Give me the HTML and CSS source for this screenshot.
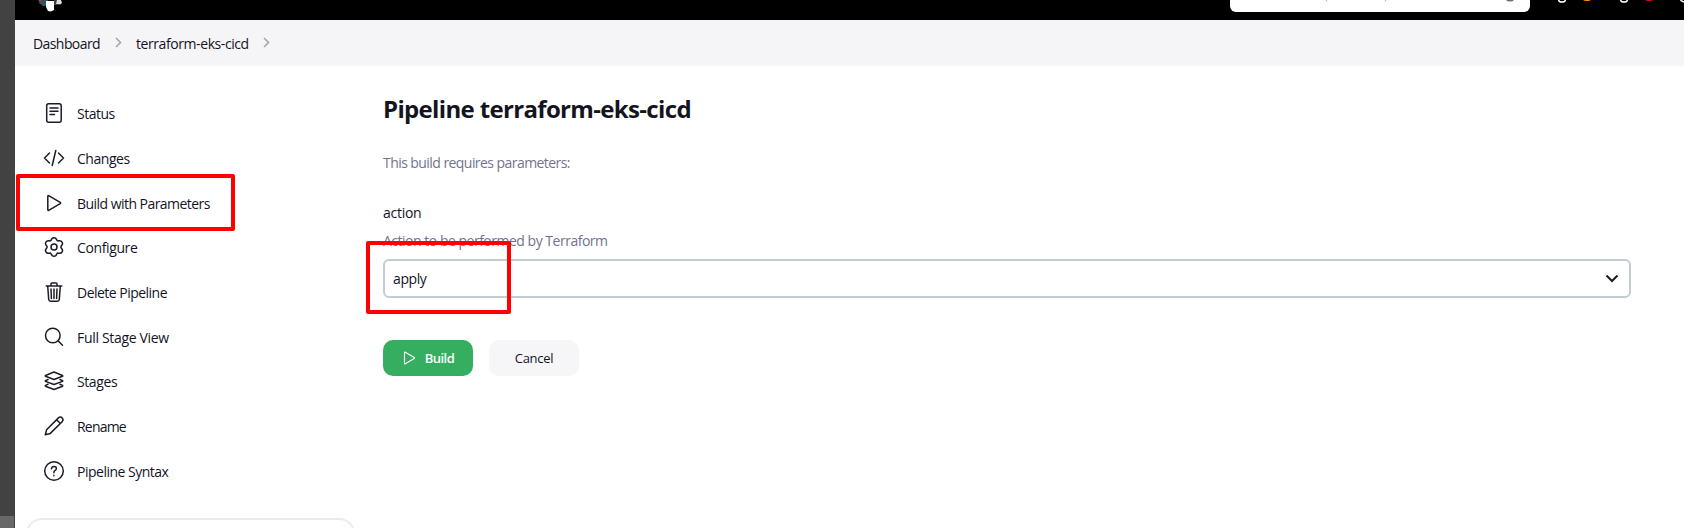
FILE: index.html
```html
<!DOCTYPE html>
<html lang="en">
<head>
<meta charset="utf-8">
<title>Pipeline terraform-eks-cicd</title>
<link rel="stylesheet" href="styles.css">
</head>
<body>
<div class="gutter"><span class="gutter-thumb"></span></div>
<div class="app">
  <header class="topbar">
    <svg class="logo" width="32" height="14" viewBox="0 0 32 14">
      <path d="M4 0h9v6H8L4 3z" fill="#36505f"/>
      <path d="M3 0h3v1H4z" fill="#c23a35"/>
      <path d="M11 1h8v9l-3 1.500-3-.5-2-4z" fill="#fff"/>
      <path d="M19 0h3v5h-3z" fill="#463b3b"/>
      <path d="M22 0h4l1 3-2 1.500-4-.5z" fill="#ddd"/>
    </svg>
    <div class="search"><svg width="300" height="12" viewBox="0 0 300 12" fill="none"><path d="M96 0l1.500 1.500M156 0l-1.500 1.500" stroke="#aaa9bd"/><path d="M276 0h8q-1 1.500-4 1.500t-4-1.500" fill="#6d6b8a"/></svg></div>
    <svg class="header-icons" width="134" height="4" viewBox="0 0 134 4" fill="none">
      <path d="M8.500 0q.5 2 3.500 2t3.500-2M70.500 0q.5 2 3.500 2t3.500-2M130.500 0q.5 1 3.500 2" stroke="#fff" stroke-width="1.500"/>
      <path d="M33 0h8l-2 1h-4z" fill="#fe820a"/><path d="M95 0h8l-2 1h-4z" fill="#e6001f"/>
    </svg>
  </header>
  <nav class="crumbs">
    <span class="crumb-home">Dashboard</span>
    <svg class="chev" width="7" height="11" viewBox="0 0 7 11"><path d="M1 1l4.500 4.500L1 10"/></svg>
    <span class="crumb-job">terraform-eks-cicd</span>
    <svg class="chev" width="7" height="11" viewBox="0 0 7 11"><path d="M1 1l4.500 4.500L1 10"/></svg>
  </nav>
  <div class="page">
    <aside class="side">
      <ul class="tasks">
        <li class="task"><svg class="icon" viewBox="0 0 22 22"><rect x="3.700" y="1.800" width="14.500" height="18.400" rx="2"/><path d="M7 6h8M7 9.200h8M7 12.400h4.500"/></svg><span class="t-status">Status</span></li>
        <li class="task"><svg class="icon" viewBox="0 0 22 22"><path d="M6.500 6L1.500 11l5 5M15.500 6l5 5-5 5M12.800 3.500l-3.600 15"/></svg><span class="t-changes">Changes</span></li>
        <li class="task"><svg class="icon" viewBox="0 0 22 22"><path d="M4.800 4.200q0-1 .9-.5l11.500 6.700q.8.600 0 1.200L5.700 18.300q-.9.500-.9-.5z"/></svg><span class="t-build">Build with Parameters</span></li>
        <li class="task"><svg class="icon" viewBox="0 0 22 22"><circle cx="11" cy="11" r="3"/><path d="M8.100 4.200C8.700 2.200 9.500 1.700 11 1.700s2.300.5 2.900 2.500q.5 1 1.600.6c2-.5 2.900 0 3.600 1.400.8 1.300.7 2.300-.8 3.700q-.8 1.100 0 2.200c1.500 1.400 1.600 2.400.8 3.700-.7 1.400-1.600 1.900-3.600 1.400q-1.100-.4-1.600.6c-.6 2-1.400 2.500-2.900 2.500s-2.300-.5-2.900-2.500q-.5-1-1.600-.6c-2 .5-2.900 0-3.600-1.400-.8-1.300-.7-2.300.8-3.700q.8-1.100 0-2.200C2.200 8.500 2.100 7.500 2.900 6.200c.7-1.400 1.600-1.900 3.600-1.400q1.100.4 1.600-.6z"/></svg><span class="t-configure">Configure</span></li>
        <li class="task"><svg class="icon" viewBox="0 0 22 22"><path d="M3.200 5h15.600M4.700 5l1 13.500q.2 1.700 1.800 1.700h7q1.600 0 1.800-1.700l1-13.500M8 5V3q0-1 1-1h4q1 0 1 1v2M8 8l.4 9.500M11 8v9.500M14 8l-.4 9.500"/></svg><span class="t-delete">Delete Pipeline</span></li>
        <li class="task"><svg class="icon" viewBox="0 0 22 22"><circle cx="9.800" cy="9.500" r="7.300"/><path d="M15 14.800l4.500 4.500"/></svg><span class="t-view">Full Stage View</span></li>
        <li class="task"><svg class="icon" viewBox="0 0 22 22"><path d="M11 2l8.500 3.500q.6.400 0 .8L11 9.500 2.500 6.300q-.6-.4 0-.8zM5 9.500L2.500 10.600q-.6.400 0 .8L11 14.500l8.500-3.100q.6-.4 0-.8L17 9.500M5 14.300l-2.500 1.100q-.6.400 0 .8L11 19.500l8.500-3.300q.6-.4 0-.8L17 14.300"/></svg><span class="t-stages">Stages</span></li>
        <li class="task"><svg class="icon" viewBox="0 0 22 22"><path d="M2.300 19.700l1.300-5L15.200 3.100q2.200-2 4 0 1.700 1.900-.1 3.700L7.300 18.400zM13.600 4.700l3.800 3.800"/></svg><span class="t-rename">Rename</span></li>
        <li class="task"><svg class="icon" viewBox="0 0 22 22"><circle cx="11" cy="11" r="9.300"/><path d="M8.500 8.700q.2-2.300 2.500-2.300 2.400 0 2.400 2.100 0 1.200-1.500 2.100-1 .6-1 1.900v.3M10.900 15.300v.4"/></svg><span class="t-syntax">Pipeline Syntax</span></li>
      </ul>
      <div class="history"></div>
      <div class="mark mark-task"></div>
    </aside>
    <main class="main">
      <h1 class="title">Pipeline terraform-eks-cicd</h1>
      <p class="intro">This build requires parameters:</p>
      <div class="label">action</div>
      <div class="hint">Action to be performed by Terraform</div>
      <div class="select"><span class="value">apply</span><svg width="14" height="9" viewBox="0 0 14 9"><path d="M1.500 1.500L7 7l5.500-5.500" fill="none" stroke="#1c1c28" stroke-width="2"/></svg></div>
      <div class="actions">
        <button class="btn btn-build"><svg width="13" height="14" viewBox="0 0 13 14"><path d="M1.500 1.600q0-.9.800-.4l8.900 5.300q.7.500 0 1L2.300 12.800q-.8.500-.8-.4z" fill="none" stroke="#fff" stroke-width="1.100"/></svg><span class="b-build">Build</span></button>
        <button class="btn btn-cancel"><span class="b-cancel">Cancel</span></button>
      </div>
      <div class="mark mark-value"></div>
    </main>
  </div>
</div>
</body>
</html>
```
FILE: styles.css
```css
* { box-sizing: border-box; }
body {
  margin: 0;
  height: 528px;
  display: flex;
  overflow: hidden;
  background: #fff;
  color: #14141f;
  font: 14px/20px "Open Sans", "Noto Sans", sans-serif;
  white-space: nowrap;
}
.gutter { width: 15px; flex: none; background: #424242; display: flex; align-items: flex-end; }
.gutter-thumb { width: 14px; height: 12px; background: #686868; }
.app { flex: 1; min-width: 0; }
.topbar { height: 20px; background: #000; display: flex; align-items: flex-start; padding-left: 20px; }
.logo { margin-right: 1163px; flex: none; }
.search { width: 300px; height: 12px; background: #fff; border-radius: 0 0 6px 6px; flex: none; }
.search svg { display: block; }
.header-icons { margin-left: 20px; flex: none; }
.crumbs { height: 46px; background: #f5f5f8; padding: 0 18px; display: flex; align-items: center; }
.crumbs span { padding-top: 2px; }
.crumb-home { width: 67px; margin-right: 15px; letter-spacing: -0.58px; }
.crumb-job { width: 113px; margin: 0 14px; letter-spacing: -0.42px; }
.chev { fill: none; stroke: #a5a4b8; stroke-width: 1.6; margin-top: -1px; }
.page { display: flex; height: 462px; }
.side { width: 368px; height: 462px; overflow: hidden; position: relative; padding: 25px 0 0 28px; flex: none; }
.tasks { list-style: none; margin: 0; padding: 0; }
.task { height: 44.66px; display: flex; align-items: center; gap: 12px; }
.task span { padding-top: 2px; }
.t-status { letter-spacing: -0.5px; }
.t-changes { letter-spacing: -0.45px; }
.t-build { letter-spacing: -0.54px; }
.t-configure { letter-spacing: -0.38px; }
.t-delete { letter-spacing: -0.52px; }
.t-view { letter-spacing: -0.32px; }
.t-stages { letter-spacing: -0.4px; }
.t-rename { letter-spacing: -0.8px; }
.t-syntax { letter-spacing: -0.5px; }
.icon { width: 22px; height: 22px; fill: none; stroke: #1c1c28; stroke-width: 1.5; stroke-linecap: round; stroke-linejoin: round; }
.history { height: 40px; width: 329px; margin: 25px 0 0 -17px; border: 2px solid #eaeaf3; border-bottom: 0; border-radius: 16px 16px 0 0; }
.main { position: relative; flex: 1; padding-top: 27px; }
.title { margin: 0; font-size: 24px; line-height: 32px; font-weight: 700; letter-spacing: -0.66px; }
.intro { margin: 28px 0 0; color: #73738c; letter-spacing: -0.56px; }
.label { margin-top: 30px; letter-spacing: -0.27px; }
.hint { margin-top: 8px; color: #73738c; letter-spacing: -0.49px; }
.select { margin-top: 8px; width: 1248px; height: 39px; border: 2px solid #c2cdd1; border-radius: 6px; padding: 0 10px 0 8px; display: flex; align-items: center; justify-content: space-between; }
.value { padding-top: 1px; letter-spacing: -0.4px; }
.actions { margin-top: 42px; display: flex; gap: 16px; }
.btn { width: 90px; height: 36px; border: 0; border-radius: 10px; padding: 0; display: flex; align-items: center; justify-content: center; gap: 9px; font: 600 13px/20px "Open Sans", "Noto Sans", sans-serif; }
.btn-build { background: #35ae5f; color: #fff; letter-spacing: -0.5px; padding-left: 1px; }
.btn-cancel { background: #f6f6f9; color: #14141f; font-weight: 500; letter-spacing: -0.3px; }
.mark { position: absolute; border: 4px solid #f00; border-radius: 2px; }
.mark-task { left: 1px; top: 108px; width: 219px; height: 57px; }
.mark-value { left: -17px; top: 175px; width: 145px; height: 73px; }
```
